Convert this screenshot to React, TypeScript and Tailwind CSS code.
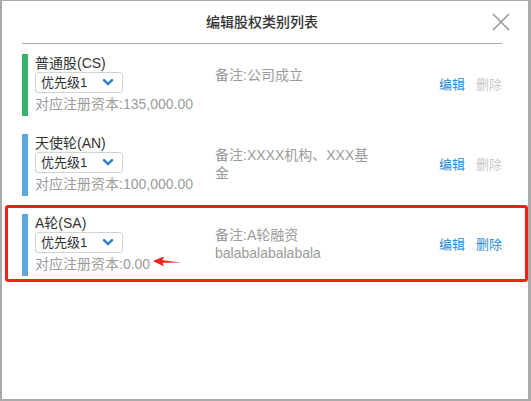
import React from "react";

type Row = {
  name: string;
  color: string;
  capital: string;
  remark: string;
  canDelete: boolean;
  marked?: boolean;
};

const rows: Row[] = [
  { name: "普通股(CS)", color: "bg-[#36b26f]", capital: "135,000.00", remark: "备注:公司成立", canDelete: false },
  { name: "天使轮(AN)", color: "bg-[#5aa8dc]", capital: "100,000.00", remark: "备注:XXXX机构、XXX基金", canDelete: false },
  { name: "A轮(SA)", color: "bg-[#5aa8dc]", capital: "0.00", remark: "备注:A轮融资balabalabalabala", canDelete: true, marked: true },
];

function Chevron() {
  return (
    <svg width="10" height="7" viewBox="0 0 10 7" className="text-[#2d7fc6]">
      <path d="M1 1.2 L5 5.2 L9 1.2" fill="none" stroke="currentColor" strokeWidth="2.4" strokeLinecap="round" strokeLinejoin="round" />
    </svg>
  );
}

function Arrow() {
  return (
    <svg width="28" height="12" viewBox="0 0 28 12" className="absolute left-[118px] top-[42px]">
      <path d="M0 5 L11 0.5 L9.5 4.2 L28 6.5 L9.5 6.8 L11 10.5 Z" fill="#f5201a" />
    </svg>
  );
}

function EquityRow({ row }: { row: Row }) {
  return (
    <div className="relative flex h-[62px]">
      {row.marked && (
        <div className="pointer-events-none absolute -left-[17px] -top-[9px] -right-[26px] -bottom-[6px] rounded-[3px] border-[3px] border-[#fb1f16]" />
      )}
      <div className={`w-[6px] ${row.color}`} />
      <div className="relative ml-[7px] w-[180px]">
        <div className="text-[14px] leading-[18px] text-[#333]">{row.name}</div>
        <div className="flex h-[21px] w-[88px] items-center justify-between rounded-[3px] border border-[#cfd4dc] pl-[5px] pr-[9px] text-[13px] text-[#333]">
          <span>优先级1</span>
          <Chevron />
        </div>
        <div className="text-[14px] leading-[23px] text-[#9b9b9b]">对应注册资本:{row.capital}</div>
        {row.marked && <Arrow />}
      </div>
      <div className="w-[158px] pt-[12px] text-[14px] leading-[18px] text-[#9b9b9b]">{row.remark}</div>
      <div className="ml-auto flex items-center gap-[11px] text-[13px]">
        <span className="text-[#2b8cd3]">编辑</span>
        <span className={row.canDelete ? "text-[#2b8cd3]" : "text-[#c8c8c8]"}>删除</span>
      </div>
    </div>
  );
}

export default function App() {
  return (
    <div className="h-[401px] w-[531px] overflow-hidden bg-white" style={{ fontFamily: '"Liberation Sans", "Noto Sans CJK SC", sans-serif' }}>
      <div className="box-border h-[401px] w-[531px] border-b-2 border-l-2 border-r-[3px] border-t border-[#aaaaaa]">
        <div className="relative ml-[20px] flex h-[43px] w-[480px] items-center justify-center border-b border-[#a9a9a9]">
          <span className="text-[14px] font-medium text-[#333]">编辑股权类别列表</span>
          <svg width="18" height="18" viewBox="0 0 18 18" className="absolute left-[470px] top-[12px]">
            <path d="M1 1 L17 17 M17 1 L1 17" stroke="#9a9a9a" strokeWidth="1.6" fill="none" />
          </svg>
        </div>
        <div className="ml-[20px] mt-[10px] flex w-[480px] flex-col gap-[18px]">
          {rows.map((r) => (
            <EquityRow key={r.name} row={r} />
          ))}
        </div>
      </div>
    </div>
  );
}
